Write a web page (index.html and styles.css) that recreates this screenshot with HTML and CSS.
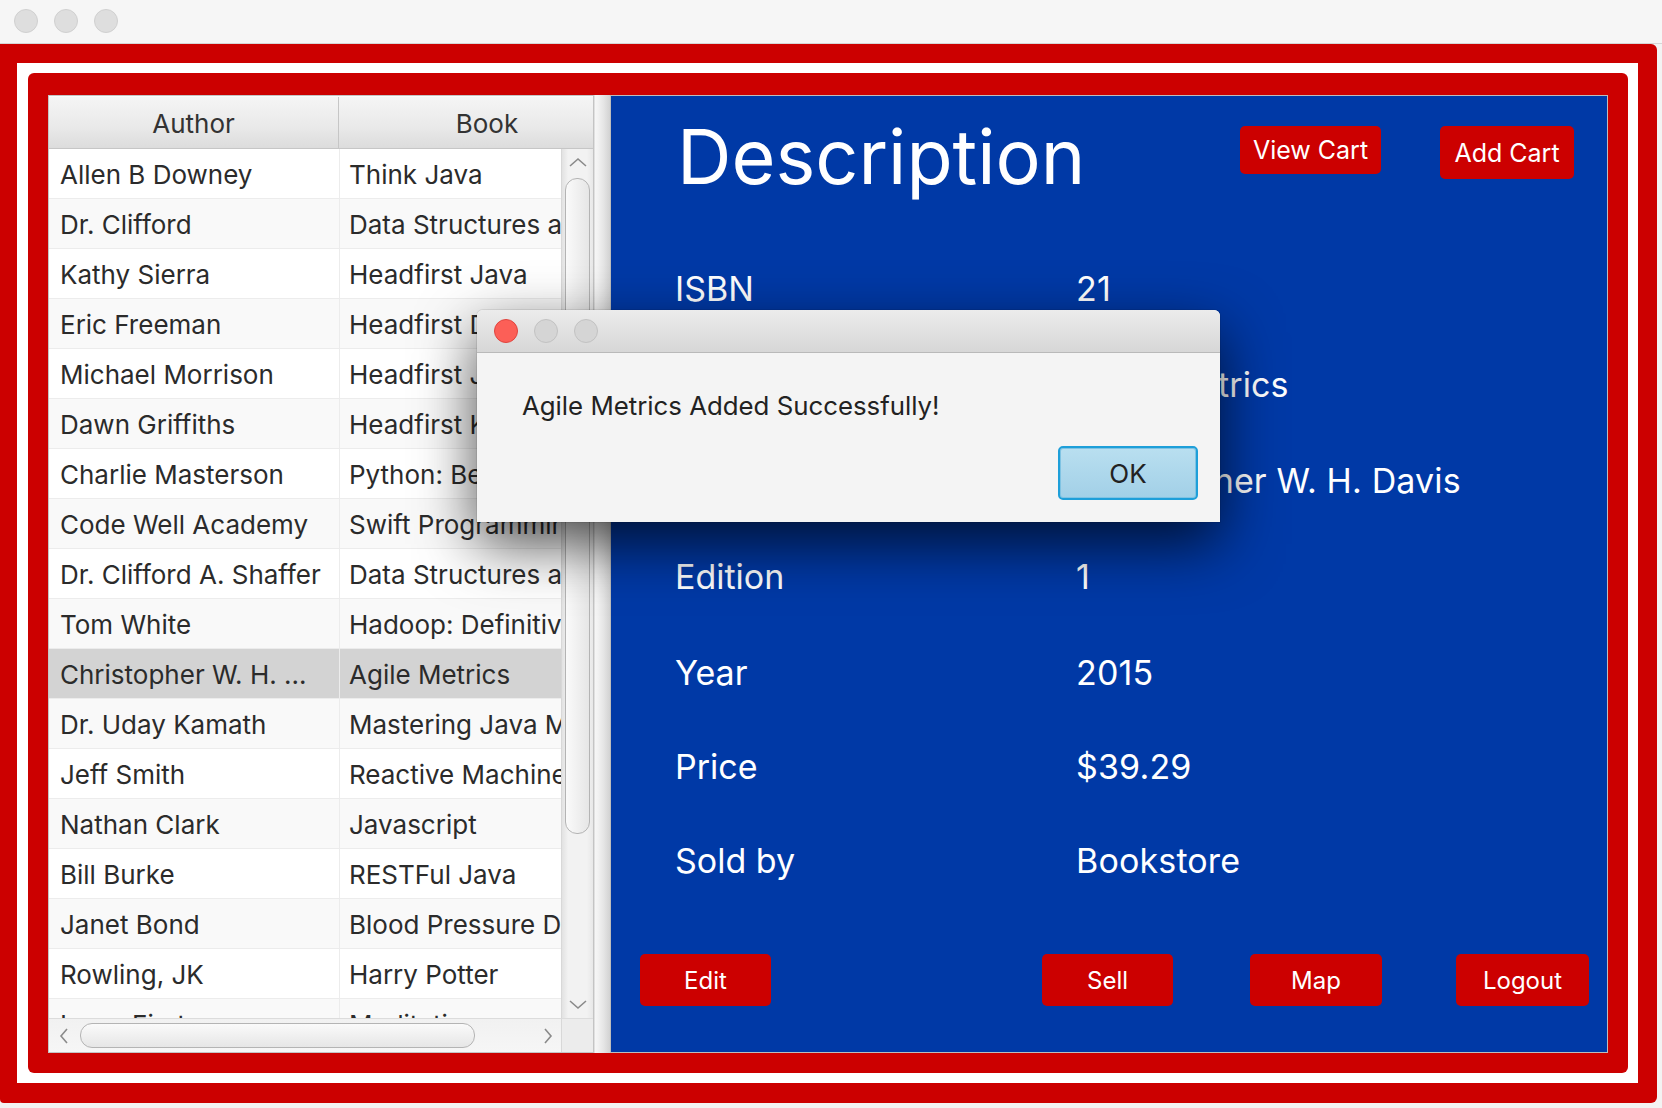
FILE: index.html
```html
<!DOCTYPE html>
<html>
<head>
<meta charset="utf-8">
<link rel="stylesheet" href="styles.css">
</head>
<body>
<div class="window">
  <div class="titlebar">
    <span class="light"></span><span class="light"></span><span class="light"></span>
  </div>
  <div class="frame-outer">
    <div class="frame-white">
      <div class="frame-inner">
        <div class="content">
          <div class="tablepane">
            <div class="thead">
              <div class="th c1">Author</div>
              <div class="th c2">Book</div>
            </div>
            <div class="tmain">
              <div class="tleft">
                <div class="rows">
                  <div class="row"><div class="td c1">Allen B Downey</div><div class="td c2">Think Java</div></div>
                  <div class="row alt"><div class="td c1">Dr. Clifford</div><div class="td c2">Data Structures and Algorithms</div></div>
                  <div class="row"><div class="td c1">Kathy Sierra</div><div class="td c2">Headfirst Java</div></div>
                  <div class="row alt"><div class="td c1">Eric Freeman</div><div class="td c2">Headfirst Design Patterns</div></div>
                  <div class="row"><div class="td c1">Michael Morrison</div><div class="td c2">Headfirst JavaScript</div></div>
                  <div class="row alt"><div class="td c1">Dawn Griffiths</div><div class="td c2">Headfirst Kotlin</div></div>
                  <div class="row"><div class="td c1">Charlie Masterson</div><div class="td c2">Python: Beginners Guide</div></div>
                  <div class="row alt"><div class="td c1">Code Well Academy</div><div class="td c2">Swift Programming</div></div>
                  <div class="row"><div class="td c1">Dr. Clifford A. Shaffer</div><div class="td c2">Data Structures and Analysis</div></div>
                  <div class="row alt"><div class="td c1">Tom White</div><div class="td c2">Hadoop: Definitive Guide</div></div>
                  <div class="row sel"><div class="td c1">Christopher W. H. ...</div><div class="td c2">Agile Metrics</div></div>
                  <div class="row alt"><div class="td c1">Dr. Uday Kamath</div><div class="td c2">Mastering Java Machine Learning</div></div>
                  <div class="row"><div class="td c1">Jeff Smith</div><div class="td c2">Reactive Machine Learning</div></div>
                  <div class="row alt"><div class="td c1">Nathan Clark</div><div class="td c2">Javascript</div></div>
                  <div class="row"><div class="td c1">Bill Burke</div><div class="td c2">RESTFul Java</div></div>
                  <div class="row alt"><div class="td c1">Janet Bond</div><div class="td c2">Blood Pressure Diet</div></div>
                  <div class="row"><div class="td c1">Rowling, JK</div><div class="td c2">Harry Potter</div></div>
                  <div class="row alt"><div class="td c1">Isaac First</div><div class="td c2">Meditations</div></div>
                </div>
                <div class="hscroll">
                  <svg class="arrow" width="10" height="16" viewBox="0 0 10 16"><polyline points="8,1 2,8 8,15" fill="none" stroke="#8a8a8a" stroke-width="1.6"/></svg>
                  <div class="hthumb"></div>
                  <svg class="arrow" width="10" height="16" viewBox="0 0 10 16"><polyline points="2,1 8,8 2,15" fill="none" stroke="#8a8a8a" stroke-width="1.6"/></svg>
                </div>
              </div>
              <div class="vcol">
                <div class="vscroll">
                  <svg class="varrow" width="18" height="10" viewBox="0 0 18 10"><polyline points="1,9 9,2 17,9" fill="none" stroke="#8a8a8a" stroke-width="1.6"/></svg>
                  <div class="vthumb"></div>
                  <div class="vspace"></div>
                  <svg class="varrow" width="18" height="10" viewBox="0 0 18 10"><polyline points="1,1 9,8 17,1" fill="none" stroke="#8a8a8a" stroke-width="1.6"/></svg>
                </div>
                <div class="corner"></div>
              </div>
            </div>
          </div>
          <div class="divider"></div>
          <div class="panel">
            <div class="phead">
              <h1 class="title">Description</h1>
              <div class="btn btn-view">View Cart</div>
              <div class="btn btn-add">Add Cart</div>
            </div>
            <div class="info">
              <div class="lbl">ISBN</div><div class="val">21</div>
              <div class="lbl">Title</div><div class="val">Agile Metrics</div>
              <div class="lbl">Author</div><div class="val">Christopher W. H. Davis</div>
              <div class="lbl">Edition</div><div class="val">1</div>
              <div class="lbl">Year</div><div class="val">2015</div>
              <div class="lbl">Price</div><div class="val">$39.29</div>
              <div class="lbl">Sold by</div><div class="val">Bookstore</div>
            </div>
            <div class="pfoot">
              <div class="btn bb b-edit">Edit</div>
              <div class="btn bb b-sell">Sell</div>
              <div class="btn bb b-map">Map</div>
              <div class="btn bb b-logout">Logout</div>
            </div>
          </div>
        </div>
      </div>
    </div>
  </div>

  <div class="dialog">
    <div class="dtitle">
      <span class="dl red"></span><span class="dl"></span><span class="dl"></span>
    </div>
    <div class="dbody">
      <div class="dmsg">Agile Metrics Added Successfully!</div>
      <div class="dbtns"><div class="okbtn">OK</div></div>
    </div>
  </div>
</div>
</body>
</html>
```

FILE: styles.css
```css
* { box-sizing: border-box; }
html, body { margin: 0; padding: 0; }
body {
  width: 1662px;
  height: 1108px;
  overflow: hidden;
  background: #f3f3f3;
  font-family: Inter, "Noto Sans", "DejaVu Sans", sans-serif;
}
.window { position: relative; width: 1662px; height: 1108px; }

.titlebar {
  height: 44px;
  background: #f6f6f6;
  border-bottom: 1px solid #d6d6d6;
  display: flex;
  align-items: center;
  gap: 16px;
  padding-left: 14px;
  padding-bottom: 1px;
}
.light {
  width: 24px; height: 24px; border-radius: 50%;
  background: #dedede;
  border: 1px solid #d0d0d0;
}

.frame-outer {
  width: 1657px;
  height: 1059px;
  background: #cc0000;
  padding: 19px 19px 20px 17px;
  border-radius: 0 6px 6px 4px;
}
.frame-white {
  width: 1621px; height: 1020px;
  background: #ffffff;
  padding: 10px 10px 10px 11px;
}
.frame-inner {
  width: 1600px; height: 1000px;
  background: #cc0000;
  border-radius: 6px;
  padding: 22px 20px 20px 20px;
}
.content {
  width: 1560px; height: 958px;
  display: flex;
}

/* table */
.tablepane {
  width: 546px; height: 958px;
  border: 1px solid #c4c4c4;
  background: #fff;
  display: flex; flex-direction: column;
}
.thead {
  height: 53px;
  display: flex;
  overflow: hidden;
  background: linear-gradient(#f5f5f5, #e9e9e9 60%, #dcdcdc);
  border-bottom: 1px solid #c6c6c6;
  border-top: 1px solid #fbfbfb;
}
.th {
  flex: none;
  display: flex; align-items: center; justify-content: center;
  font-size: 26px; color: #333;
  padding-top: 2px;
}
.th.c1 { width: 290px; border-right: 1px solid #c6c6c6; }
.th.c2 { width: 296px; }

.tmain { flex: 1; display: flex; min-height: 0; }
.tleft { width: 512px; display: flex; flex-direction: column; }
.rows { height: 869px; overflow: hidden; background: #fff; }
.row {
  height: 50px;
  display: flex;
  background: #ffffff;
  border-bottom: 1px solid #ececec;
}
.row.alt { background: #f9f9f9; }
.row.sel { background: #d3d3d3; }
.td {
  font-size: 26px; color: #2b2b2b;
  white-space: nowrap; overflow: hidden;
  display: flex; align-items: center;
  padding-top: 2px;
}
.td.c1 { width: 291px; padding-left: 11px; border-right: 1px solid #ececec; }
.td.c2 { width: 221px; padding-left: 9px; }

.hscroll {
  height: 34px;
  background: linear-gradient(#f1f1f1, #f6f6f6);
  border-top: 1px solid #dcdcdc;
  display: flex; align-items: center;
  padding: 0 8px 0 10px;
}
.hthumb {
  width: 395px; height: 25px;
  margin-left: 11px;
  border: 1px solid #b4b4b4;
  border-radius: 12px;
  background: linear-gradient(#fafafa, #e6e6e6);
}
.hscroll .arrow:last-child { margin-left: auto; }

.vcol { width: 32px; display: flex; flex-direction: column; }
.vscroll {
  height: 869px;
  background: linear-gradient(to right, #e2e2e2, #f2f2f2 20%, #f2f2f2 80%, #e8e8e8);
  border-left: 1px solid #d8d8d8;
  display: flex; flex-direction: column; align-items: center;
  padding-top: 8px; padding-bottom: 8px;
}
.varrow { flex: none; }
.vthumb {
  width: 25px; height: 656px;
  margin-top: 11px;
  border: 1px solid #b4b4b4;
  border-radius: 12px;
  background: linear-gradient(to right, #fafafa, #e6e6e6);
}
.vspace { flex: 1; }
.corner { height: 34px; background: #ececec; border-left: 1px solid #d8d8d8; border-top: 1px solid #dcdcdc; }

.divider {
  width: 16px; height: 958px;
  background: linear-gradient(to right, #c9c9c9 0, #f6f6f6 1px, #f2f2f2 4px, #e4e4e4 10px, #d2d2d2 16px);
}

/* blue panel */
.panel {
  width: 998px; height: 958px;
  background: #0039a6;
  border: 1px solid #bdbdbd;
  display: flex; flex-direction: column;
  color: #ffffff;
}
.phead {
  display: flex; align-items: flex-start;
  padding: 30px 33px 0 66px;
}
.title {
  margin: -7px 0 0 0;
  font-size: 75.5px; line-height: 76px;
  font-weight: 400;
}
.btn {
  background: #cc0000;
  color: #fff;
  border-radius: 5px;
  display: flex; align-items: center; justify-content: center;
  font-size: 25px;
}
.btn-view { margin-left: auto; width: 141px; height: 48px; }
.btn-add { margin-left: 59px; width: 134px; height: 53px; }

.info {
  margin-top: 74px;
  margin-left: 64px;
  display: grid;
  grid-template-columns: 401px 1fr;
  grid-template-rows: 96px 96px 96px 96px 94px 94px 40px;
  font-size: 34px; line-height: 40px;
}
.lbl, .val { white-space: nowrap; }
.val { letter-spacing: 0.15px; }

.pfoot {
  margin-top: auto;
  display: flex;
  padding: 0 18px 46px 29px;
}
.bb { height: 52px; font-size: 24px; }
.b-edit { width: 131px; }
.b-sell { width: 131px; margin-left: auto; }
.b-map { width: 132px; margin-left: 77px; }
.b-logout { width: 133px; margin-left: 74px; }

/* dialog */
.dialog {
  position: absolute;
  left: 477px; top: 310px;
  width: 743px; height: 212px;
  background: #f4f4f4;
  border-radius: 6px 6px 0 0;
  box-shadow: 0 22px 60px rgba(0, 0, 0, 0.7), 0 0 0 1px rgba(0,0,0,0.08);
  display: flex; flex-direction: column;
}
.dtitle {
  height: 43px;
  border-radius: 6px 6px 0 0;
  background: linear-gradient(#ececec, #d7d7d7);
  border-bottom: 1px solid #b9b9b9;
  display: flex; align-items: center;
  gap: 16px;
  padding-left: 17px;
}
.dl {
  width: 24px; height: 24px; border-radius: 50%;
  background: #d5d5d5;
  border: 1px solid #c2c2c2;
}
.dl.red { background: #fc5f57; border-color: #e0443e; }
.dbody {
  flex: 1;
  padding: 38px 22px 22px 45px;
  display: flex; flex-direction: column;
}
.dmsg { font-size: 25.8px; line-height: 30px; color: #222; }
.dbtns { margin-top: 25px; display: flex; justify-content: flex-end; }
.okbtn {
  width: 140px; height: 54px;
  border: 2px solid #1e9fd9;
  border-radius: 5px;
  background: linear-gradient(#b9dff0, #a2d0e7);
  box-shadow: inset 0 0 0 1px #7fc3e3;
  display: flex; align-items: center; justify-content: center;
  font-size: 26px; color: #222;
}
```
